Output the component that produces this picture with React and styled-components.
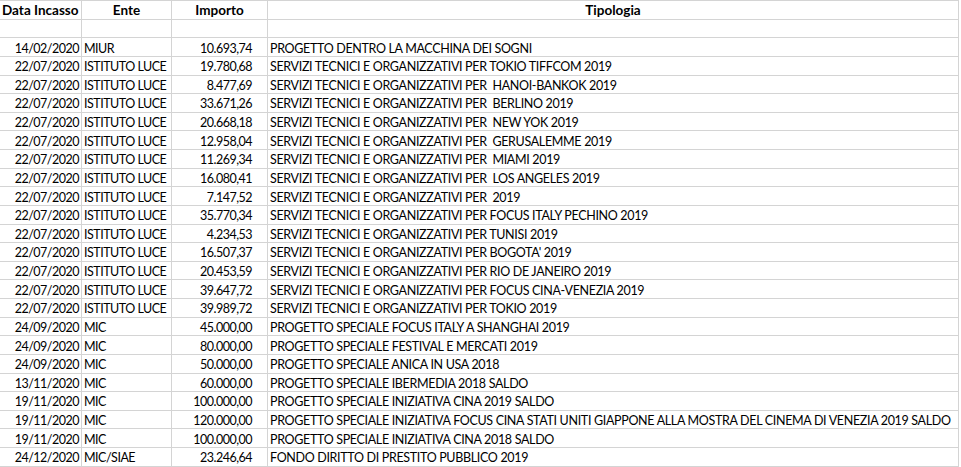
import React from 'react';
import styled, { createGlobalStyle } from 'styled-components';

const rows = [
  ['14/02/2020', 'MIUR', '10.693,74', 'PROGETTO DENTRO LA MACCHINA DEI SOGNI'],
  ['22/07/2020', 'ISTITUTO LUCE', '19.780,68', 'SERVIZI TECNICI E ORGANIZZATIVI PER TOKIO TIFFCOM 2019'],
  ['22/07/2020', 'ISTITUTO LUCE', '8.477,69', 'SERVIZI TECNICI E ORGANIZZATIVI PER  HANOI-BANKOK 2019'],
  ['22/07/2020', 'ISTITUTO LUCE', '33.671,26', 'SERVIZI TECNICI E ORGANIZZATIVI PER  BERLINO 2019'],
  ['22/07/2020', 'ISTITUTO LUCE', '20.668,18', 'SERVIZI TECNICI E ORGANIZZATIVI PER  NEW YOK 2019'],
  ['22/07/2020', 'ISTITUTO LUCE', '12.958,04', 'SERVIZI TECNICI E ORGANIZZATIVI PER  GERUSALEMME 2019'],
  ['22/07/2020', 'ISTITUTO LUCE', '11.269,34', 'SERVIZI TECNICI E ORGANIZZATIVI PER  MIAMI 2019'],
  ['22/07/2020', 'ISTITUTO LUCE', '16.080,41', 'SERVIZI TECNICI E ORGANIZZATIVI PER  LOS ANGELES 2019'],
  ['22/07/2020', 'ISTITUTO LUCE', '7.147,52', 'SERVIZI TECNICI E ORGANIZZATIVI PER  2019'],
  ['22/07/2020', 'ISTITUTO LUCE', '35.770,34', 'SERVIZI TECNICI E ORGANIZZATIVI PER FOCUS ITALY PECHINO 2019'],
  ['22/07/2020', 'ISTITUTO LUCE', '4.234,53', 'SERVIZI TECNICI E ORGANIZZATIVI PER TUNISI 2019'],
  ['22/07/2020', 'ISTITUTO LUCE', '16.507,37', "SERVIZI TECNICI E ORGANIZZATIVI PER BOGOTA' 2019"],
  ['22/07/2020', 'ISTITUTO LUCE', '20.453,59', 'SERVIZI TECNICI E ORGANIZZATIVI PER RIO DE JANEIRO 2019'],
  ['22/07/2020', 'ISTITUTO LUCE', '39.647,72', 'SERVIZI TECNICI E ORGANIZZATIVI PER FOCUS CINA-VENEZIA 2019'],
  ['22/07/2020', 'ISTITUTO LUCE', '39.989,72', 'SERVIZI TECNICI E ORGANIZZATIVI PER TOKIO 2019'],
  ['24/09/2020', 'MIC', '45.000,00', 'PROGETTO SPECIALE FOCUS ITALY A SHANGHAI 2019'],
  ['24/09/2020', 'MIC', '80.000,00', 'PROGETTO SPECIALE FESTIVAL E MERCATI 2019'],
  ['24/09/2020', 'MIC', '50.000,00', 'PROGETTO SPECIALE ANICA IN USA 2018'],
  ['13/11/2020', 'MIC', '60.000,00', 'PROGETTO SPECIALE IBERMEDIA 2018 SALDO'],
  ['19/11/2020', 'MIC', '100.000,00', 'PROGETTO SPECIALE INIZIATIVA CINA 2019 SALDO'],
  ['19/11/2020', 'MIC', '120.000,00', 'PROGETTO SPECIALE INIZIATIVA FOCUS CINA STATI UNITI GIAPPONE ALLA MOSTRA DEL CINEMA DI VENEZIA 2019 SALDO'],
  ['19/11/2020', 'MIC', '100.000,00', 'PROGETTO SPECIALE INIZIATIVA CINA 2018 SALDO'],
  ['24/12/2020', 'MIC/SIAE', '23.246,64', 'FONDO DIRITTO DI PRESTITO PUBBLICO 2019'],
];

function App() {
  return (
    <>
      <GlobalStyle />
      <Sheet>
        <HeadCell align='left'>Data Incasso</HeadCell>
        <HeadCell>Ente</HeadCell>
        <HeadCell>Importo</HeadCell>
        <HeadCell>Tipologia</HeadCell>

        <Cell />
        <Cell />
        <Cell />
        <Cell />

        {rows.map((r, i) => (
          <React.Fragment key={i}>
            <Cell align='right' $tight>{r[0]}</Cell>
            <Cell $tight>{r[1]}</Cell>
            <Cell align='right' $tight $pr={15}>{r[2]}</Cell>
            <Cell>{r[3]}</Cell>
          </React.Fragment>
        ))}
      </Sheet>
    </>
  );
}

export default App;

const GlobalStyle = createGlobalStyle`
  body {
    margin: 0;
    background: #fff;
    font-family: Lato, "Open Sans", sans-serif;
    color: #000;
  }
`;

const Sheet = styled.div`
  width: 959px;
  display: grid;
  grid-template-columns: 82px 90px 96px 691px;
  grid-auto-rows: 18.64px;
  border-top: 1px solid #d4d4d4;
  box-sizing: border-box;
`;

const Cell = styled.div`
  display: flex;
  align-items: center;
  justify-content: ${(p) => (p.align === 'right' ? 'flex-end' : 'flex-start')};
  padding: 2px ${(p) => p.$pr || 2}px 0 2px;
  box-sizing: border-box;
  border-right: 1px solid #d4d4d4;
  border-bottom: 1px solid #d4d4d4;
  font-size: 12.5px;
  letter-spacing: ${(p) => (p.$tight ? '-0.5px' : '-0.33px')};
  white-space: pre;
  overflow: hidden;
`;

const HeadCell = styled(Cell)`
  justify-content: ${(p) => (p.align === 'left' ? 'flex-start' : 'center')};
  padding-top: 0;
  font-size: 13.5px;
  letter-spacing: 0;
  font-weight: 700;
`;
